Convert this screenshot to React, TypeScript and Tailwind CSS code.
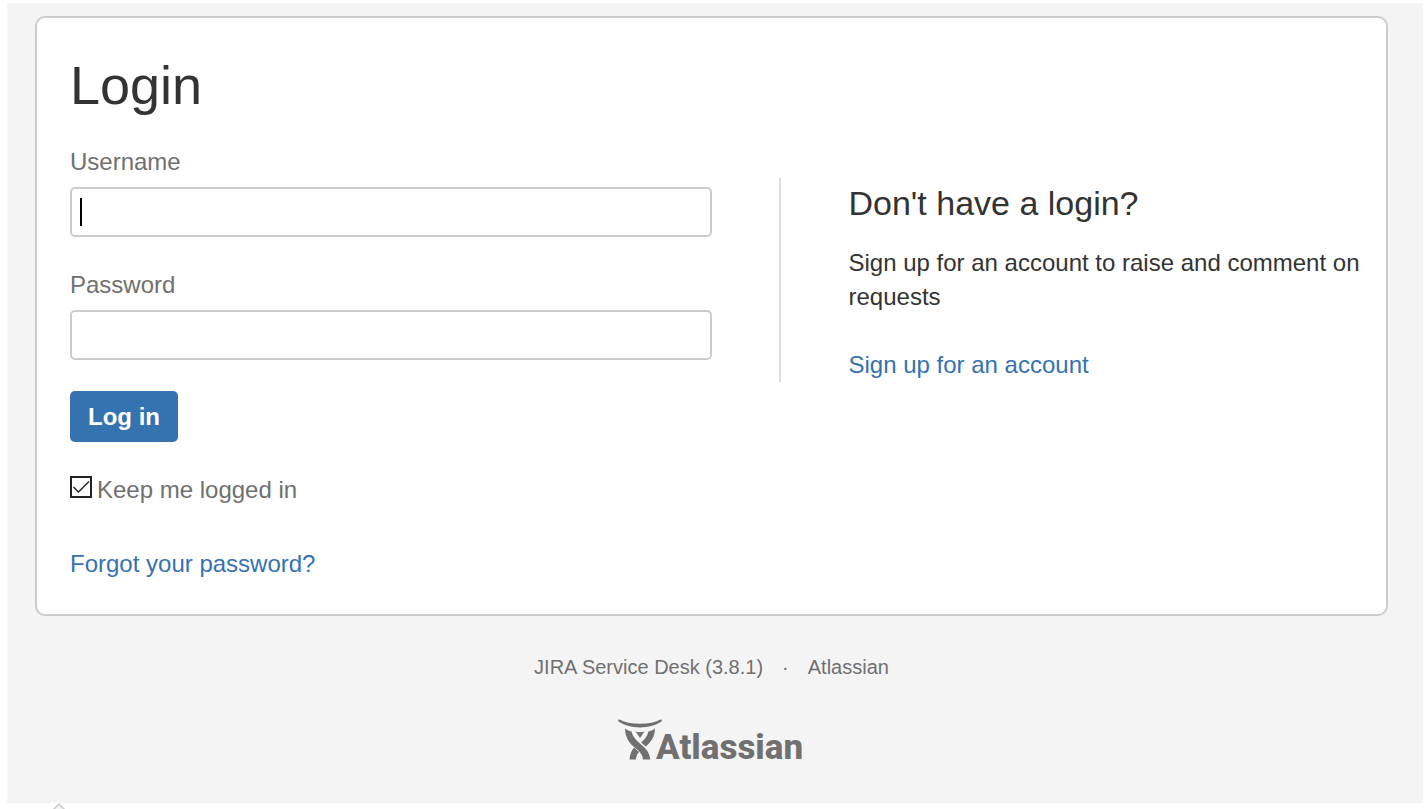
import { useState } from 'react'

const AtlassianLogo = () => (
  <svg viewBox="0 0 188 44" className="h-11 w-[188px] overflow-visible" fill="#707070" role="img" aria-label="Atlassian">
    <path d="M0.8 0.2C12 6.2 32 6.2 43.2 0.2L44 2C33 10.6 11 10.6 0 2Z" />
    <path d="M17.6 12.6Q22 13.8 26.4 12.6L22 19Z" />
    <path d="M7 9.4C9 11 11 12 13.6 12.4C14.6 17.4 18 21 22 24.4C27.5 29 31.8 33.4 32.2 40.4H25C24.6 36 22.2 33 18.6 30C11.6 24.6 7.2 19 7 9.4Z" />
    <path d="M37 9.4C35 11 33 12 30.4 12.4C29.4 17 27 20.2 23.2 23.4L27.8 27.6C33.5 22.4 36.8 17.4 37 9.4Z" />
    <path d="M16 28.6L21 33C19.2 35 18.2 37.4 18 40.4H11.6C11.8 35.8 13.2 32 16 28.6Z" />
    <text x="38" y="40" fontSize="35" fontWeight="800" fontFamily="Roboto, 'Liberation Sans', sans-serif">
      Atlassian
    </text>
  </svg>
)

const inputClass =
  'block h-[50px] w-full rounded-[5px] border-2 border-[#cccccc] bg-white px-2 text-2xl text-[#333333] outline-none'

const App = () => {
  const [username, setUsername] = useState('')
  const [password, setPassword] = useState('')
  const [remember, setRemember] = useState(true)

  return (
    <div className="bg-white pt-[3px] pr-[3px] pl-[7px] font-['Liberation_Sans',Arial,sans-serif] text-2xl text-[#333333]">
      <div className="bg-[#f4f4f4] pt-[13px] pr-[35px] pb-10 pl-7">
        <main className="rounded-[10px] border-2 border-[#cccccc] bg-white px-[33px] pt-[35px] pb-[34px]">
          <h1 className="text-[54px] leading-[64px]">Login</h1>
          <div className="flex items-start gap-[67px]">
            <form className="mt-[29px] w-1/2 shrink-0" onSubmit={(e) => e.preventDefault()}>
              <label htmlFor="username" className="mb-[9px] block leading-8 text-[#707070]">
                Username
              </label>
              <div className="relative mb-8">
                <input
                  id="username"
                  type="text"
                  value={username}
                  onChange={(e) => setUsername(e.target.value)}
                  className={inputClass}
                />
                {username === '' && (
                  <span className="pointer-events-none absolute top-[11px] left-[10px] h-7 w-0.5 bg-black" />
                )}
              </div>
              <label htmlFor="password" className="mb-[9px] block leading-8 text-[#707070]">
                Password
              </label>
              <input
                id="password"
                type="password"
                value={password}
                onChange={(e) => setPassword(e.target.value)}
                className={inputClass}
              />
              <button type="submit" className="mt-[31px] block h-[51px] rounded-[5px] bg-[#3572b0] px-[18px] font-bold text-white">
                Log in
              </button>
              <div className="mt-8 flex gap-[5px]">
                <span className="relative mt-0.5 h-[22px] w-[22px]">
                  <input
                    id="remember"
                    type="checkbox"
                    checked={remember}
                    onChange={(e) => setRemember(e.target.checked)}
                    className="block h-[22px] w-[22px] appearance-none border-2 border-[#222222] bg-white"
                  />
                  {remember && (
                    <svg viewBox="0 0 22 22" className="pointer-events-none absolute inset-0" fill="none" stroke="#222222" strokeWidth="1.4">
                      <path d="M3.5 11L8.5 16L19 5.5" />
                    </svg>
                  )}
                </span>
                <label htmlFor="remember" className="leading-8 text-[#707070]">
                  Keep me logged in
                </label>
              </div>
              <a href="#forgot" className="mt-[42px] block leading-8 text-[#3572b0]">
                Forgot your password?
              </a>
            </form>
            <section className="mt-[61px] -mr-3 flex-1 border-l-2 border-[#dddddd] pl-[68px] leading-[34px]">
              <h2 className="text-[34px] leading-[50px]">Don't have a login?</h2>
              <p className="mt-[18px]">Sign up for an account to raise and comment on requests</p>
              <a href="#signup" className="mt-[34px] block text-[#3572b0]">
                Sign up for an account
              </a>
            </section>
          </div>
        </main>
        <footer className="mt-[37px] flex flex-col items-center text-xl leading-7 text-[#707070]">
          <div className="flex gap-[19px]">
            <span>JIRA Service Desk (3.8.1)</span>
            <span>·</span>
            <a href="#atlassian">Atlassian</a>
          </div>
          <a href="#home" className="mt-[38px]">
            <AtlassianLogo />
          </a>
        </footer>
      </div>
      <svg viewBox="0 0 14 6" className="ml-[45px] block h-1.5 w-3.5" fill="#f4f4f4" stroke="#cccccc" strokeWidth="1.5">
        <path d="M1 7L7 1L13 7" />
      </svg>
    </div>
  )
}

export default App
